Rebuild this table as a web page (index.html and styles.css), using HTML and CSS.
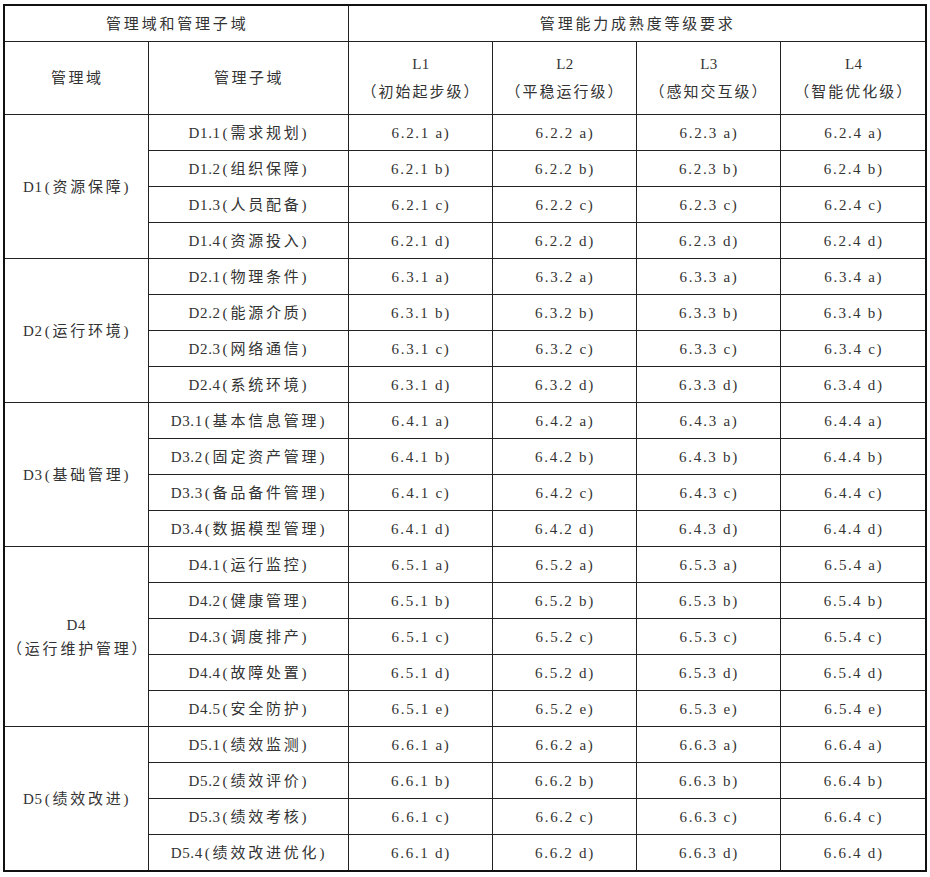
FILE: index.html
```html
<!DOCTYPE html>
<html lang="zh">
<head>
<meta charset="utf-8">
<title>管理能力成熟度等级要求</title>
<link rel="stylesheet" href="styles.css">
</head>
<body>
<table class="grid">
  <colgroup>
    <col class="c-domain">
    <col class="c-sub">
    <col class="c-lv">
    <col class="c-lv">
    <col class="c-lv">
    <col class="c-lv4">
  </colgroup>
  <thead>
    <tr class="h1">
      <th colspan="2">管理域和管理子域</th>
      <th colspan="4">管理能力成熟度等级要求</th>
    </tr>
    <tr class="h2">
      <th>管理域</th>
      <th>管理子域</th>
      <th class="lvh"><span class="lvname">L1</span><br>（初始起步级）</th>
      <th class="lvh"><span class="lvname">L2</span><br>（平稳运行级）</th>
      <th class="lvh"><span class="lvname">L3</span><br>（感知交互级）</th>
      <th class="lvh"><span class="lvname">L4</span><br>（智能优化级）</th>
    </tr>
  </thead>
  <tbody>
    <tr><td rowspan="4"><span class="code">D1</span>(资源保障)</td><td><span class="code">D1.1</span>(需求规划)</td><td class="lv">6.2.1 a)</td><td class="lv">6.2.2 a)</td><td class="lv">6.2.3 a)</td><td class="lv">6.2.4 a)</td></tr>
    <tr><td><span class="code">D1.2</span>(组织保障)</td><td class="lv">6.2.1 b)</td><td class="lv">6.2.2 b)</td><td class="lv">6.2.3 b)</td><td class="lv">6.2.4 b)</td></tr>
    <tr><td><span class="code">D1.3</span>(人员配备)</td><td class="lv">6.2.1 c)</td><td class="lv">6.2.2 c)</td><td class="lv">6.2.3 c)</td><td class="lv">6.2.4 c)</td></tr>
    <tr><td><span class="code">D1.4</span>(资源投入)</td><td class="lv">6.2.1 d)</td><td class="lv">6.2.2 d)</td><td class="lv">6.2.3 d)</td><td class="lv">6.2.4 d)</td></tr>

    <tr><td rowspan="4"><span class="code">D2</span>(运行环境)</td><td><span class="code">D2.1</span>(物理条件)</td><td class="lv">6.3.1 a)</td><td class="lv">6.3.2 a)</td><td class="lv">6.3.3 a)</td><td class="lv">6.3.4 a)</td></tr>
    <tr><td><span class="code">D2.2</span>(能源介质)</td><td class="lv">6.3.1 b)</td><td class="lv">6.3.2 b)</td><td class="lv">6.3.3 b)</td><td class="lv">6.3.4 b)</td></tr>
    <tr><td><span class="code">D2.3</span>(网络通信)</td><td class="lv">6.3.1 c)</td><td class="lv">6.3.2 c)</td><td class="lv">6.3.3 c)</td><td class="lv">6.3.4 c)</td></tr>
    <tr><td><span class="code">D2.4</span>(系统环境)</td><td class="lv">6.3.1 d)</td><td class="lv">6.3.2 d)</td><td class="lv">6.3.3 d)</td><td class="lv">6.3.4 d)</td></tr>

    <tr><td rowspan="4"><span class="code">D3</span>(基础管理)</td><td><span class="code">D3.1</span>(基本信息管理)</td><td class="lv">6.4.1 a)</td><td class="lv">6.4.2 a)</td><td class="lv">6.4.3 a)</td><td class="lv">6.4.4 a)</td></tr>
    <tr><td><span class="code">D3.2</span>(固定资产管理)</td><td class="lv">6.4.1 b)</td><td class="lv">6.4.2 b)</td><td class="lv">6.4.3 b)</td><td class="lv">6.4.4 b)</td></tr>
    <tr><td><span class="code">D3.3</span>(备品备件管理)</td><td class="lv">6.4.1 c)</td><td class="lv">6.4.2 c)</td><td class="lv">6.4.3 c)</td><td class="lv">6.4.4 c)</td></tr>
    <tr><td><span class="code">D3.4</span>(数据模型管理)</td><td class="lv">6.4.1 d)</td><td class="lv">6.4.2 d)</td><td class="lv">6.4.3 d)</td><td class="lv">6.4.4 d)</td></tr>

    <tr><td rowspan="5"><span class="code">D4</span><br>（运行维护管理）</td><td><span class="code">D4.1</span>(运行监控)</td><td class="lv">6.5.1 a)</td><td class="lv">6.5.2 a)</td><td class="lv">6.5.3 a)</td><td class="lv">6.5.4 a)</td></tr>
    <tr><td><span class="code">D4.2</span>(健康管理)</td><td class="lv">6.5.1 b)</td><td class="lv">6.5.2 b)</td><td class="lv">6.5.3 b)</td><td class="lv">6.5.4 b)</td></tr>
    <tr><td><span class="code">D4.3</span>(调度排产)</td><td class="lv">6.5.1 c)</td><td class="lv">6.5.2 c)</td><td class="lv">6.5.3 c)</td><td class="lv">6.5.4 c)</td></tr>
    <tr><td><span class="code">D4.4</span>(故障处置)</td><td class="lv">6.5.1 d)</td><td class="lv">6.5.2 d)</td><td class="lv">6.5.3 d)</td><td class="lv">6.5.4 d)</td></tr>
    <tr><td><span class="code">D4.5</span>(安全防护)</td><td class="lv">6.5.1 e)</td><td class="lv">6.5.2 e)</td><td class="lv">6.5.3 e)</td><td class="lv">6.5.4 e)</td></tr>

    <tr><td rowspan="4"><span class="code">D5</span>(绩效改进)</td><td><span class="code">D5.1</span>(绩效监测)</td><td class="lv">6.6.1 a)</td><td class="lv">6.6.2 a)</td><td class="lv">6.6.3 a)</td><td class="lv">6.6.4 a)</td></tr>
    <tr><td><span class="code">D5.2</span>(绩效评价)</td><td class="lv">6.6.1 b)</td><td class="lv">6.6.2 b)</td><td class="lv">6.6.3 b)</td><td class="lv">6.6.4 b)</td></tr>
    <tr><td><span class="code">D5.3</span>(绩效考核)</td><td class="lv">6.6.1 c)</td><td class="lv">6.6.2 c)</td><td class="lv">6.6.3 c)</td><td class="lv">6.6.4 c)</td></tr>
    <tr><td><span class="code">D5.4</span>(绩效改进优化)</td><td class="lv">6.6.1 d)</td><td class="lv">6.6.2 d)</td><td class="lv">6.6.3 d)</td><td class="lv">6.6.4 d)</td></tr>
  </tbody>
</table>
</body>
</html>
```
FILE: styles.css
```css
html, body {
  margin: 0;
  padding: 0;
  background: #ffffff;
}

body {
  padding: 4px 0 0 3px;
  font-family: "Liberation Serif", "Noto Sans CJK SC", serif;
  font-size: 15px;
  color: #333333;
}

.grid {
  border-collapse: collapse;
  table-layout: fixed;
  width: 922px;
  border: 2px solid #111111;
}

.c-domain { width: 144px; }
.c-sub { width: 200px; }
.c-lv { width: 144px; }
.c-lv4 { width: 146px; }

.grid th,
.grid td {
  border: 1px solid #222222;
  padding: 0 0 0 2px;
  text-align: center;
  vertical-align: middle;
  font-weight: normal;
  letter-spacing: 2.8px;
  line-height: 24px;
  white-space: nowrap;
}

.h1 th { height: 35px; letter-spacing: 2.8px; }
.h2 th { height: 72px; line-height: 28px; letter-spacing: 2.5px; }
.h2 th.lvh { letter-spacing: 2px; }

.lvname { letter-spacing: 0.5px; }

.grid tbody td { height: 35px; }
.grid tbody td.lv { letter-spacing: 1.7px; }

.code {
  letter-spacing: 0.6px;
  margin-right: 2px;
}
```
